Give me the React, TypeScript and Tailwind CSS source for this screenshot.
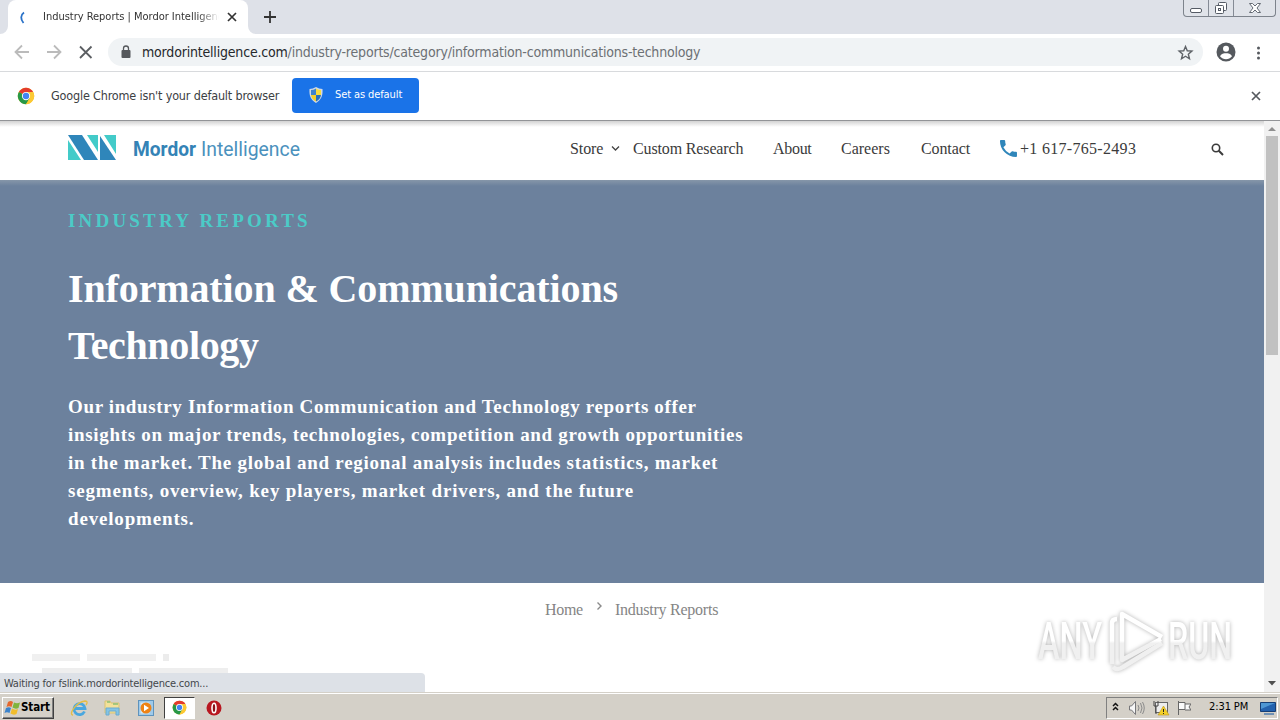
import { clsx } from 'clsx';
import type { ReactNode } from 'react';

const tahoma = "font-['DejaVu_Sans_Condensed','DejaVu_Sans',sans-serif] [font-stretch:condensed]";
const times = "font-['Liberation_Serif',serif]";

const ChromeLogo = ({ size }: { size: number }) => (
  <svg width={size} height={size} viewBox="0 0 48 48">
    <circle cx="24" cy="24" r="22" fill="#fbc116" />
    <path d="M24 24 5 13A22 22 0 0 1 43 13H24Z" fill="#e33b2e" />
    <path d="M24 24 5 13A22 22 0 0 0 24 46L34 30Z" fill="#279847" />
    <path d="M24 13H43A22 22 0 0 1 24 46L34 29Z" fill="#fcc934" />
    <circle cx="24" cy="24" r="11" fill="#fff" />
    <circle cx="24" cy="24" r="8.5" fill="#4285f4" />
  </svg>
);

const Cross = ({ size, color }: { size: number; color: string }) => (
  <svg width={size} height={size} viewBox="0 0 10 10" stroke={color} strokeWidth="1.7">
    <path d="M1 1l8 8M9 1L1 9" />
  </svg>
);

const TabStrip = () => (
  <div className="flex h-[34px] shrink-0 bg-[#dee1e8]">
    <svg className="self-end" width="8" height="8" viewBox="0 0 8 8">
      <path d="M8 0v8H0a8 8 0 0 0 8-8Z" fill="#fff" />
    </svg>
    <div className="flex w-60 items-center rounded-t-lg bg-white">
      <svg className="ml-2.5 shrink-0" width="9" height="16" viewBox="0 0 9 16" fill="none" stroke="#2a72c8" strokeWidth="1.8">
        <path d="M6 3.5C2.5 6 2.3 10 5.5 14" />
      </svg>
      <div className={clsx(tahoma, 'ml-4 w-[176px] overflow-hidden whitespace-nowrap text-[11px] tracking-[-0.02px] text-[#333] [mask-image:linear-gradient(to_right,black_88%,transparent)]')}>
        Industry Reports | Mordor Intelligence
      </div>
      <div className="ml-2"><Cross size={10} color="#333" /></div>
    </div>
    <svg className="self-end" width="8" height="8" viewBox="0 0 8 8">
      <path d="M0 0v8h8a8 8 0 0 1-8-8Z" fill="#fff" />
    </svg>
    <svg className="ml-2 mt-[11px]" width="12" height="12" stroke="#333" strokeWidth="1.8">
      <path d="M6 0v12M0 6h12" />
    </svg>
    <div className="ml-auto mr-1 flex h-[17px] w-[93px] overflow-hidden rounded-b-[4px] border border-t-0 border-[#7d838c] bg-[#e0e3e9]">
      <svg width="92" height="16" fill="none" stroke="#555b65">
        <path d="M24.5 0v16M49.5 0v16" stroke="#858b95" />
        <rect x="6.5" y="8.5" width="11" height="4" rx="1.5" fill="#fff" />
        <rect x="34.5" y="2.5" width="8" height="8" rx="1" fill="#fff" />
        <rect x="31.5" y="5.5" width="8" height="8" rx="1" fill="#fff" />
        <rect x="34.5" y="8.5" width="2" height="2" />
        <path d="M65.5 3.5h3l2.5 2.5 2.5-2.5h3l-3.500 4.500 3.500 4.500h-3l-2.500-2.500-2.500 2.500h-3l3.500-4.500Z" fill="#fff" strokeWidth=".9" />
      </svg>
    </div>
  </div>
);

const Toolbar = () => (
  <div className="flex h-[38px] shrink-0 items-center border-b border-[#d8dadd] bg-white">
    <svg className="mb-0.5 ml-3.5" width="80" height="16" viewBox="0 0 80 16" fill="none" strokeWidth="1.8">
      <path d="M15 8H2M8 1.500L1.500 8 8 14.500M33 8h13M40 1.500L46.500 8 40 14.500" stroke="#bbb" />
      <path d="M66 2.500L77.500 14M77.500 2.500L66 14" stroke="#5b5e62" />
    </svg>
    <div className="mb-px ml-3.5 flex h-7 w-[1095px] items-center rounded-full bg-[#f0f3f5] pl-[13px] pr-[9px]">
      <svg width="10" height="14" viewBox="0 0 10 14">
        <rect y="5" x=".5" width="9" height="8" rx="1" fill="#55585c" />
        <path d="M2.500 6V3.500a2.500 2.500 0 0 1 5 0V6" fill="none" stroke="#55585c" strokeWidth="1.3" />
      </svg>
      <span className={clsx(tahoma, 'ml-[11px] whitespace-nowrap text-[14px] tracking-[-0.19px] text-[#6c7074]')}>
        <span className="text-[#25282c]">mordorintelligence.com</span>
        /industry-reports/category/information-communications-technology
      </span>
      <svg className="ml-auto" width="17" height="17" viewBox="0 0 24 24" fill="none" stroke="#5f6368" strokeWidth="2">
        <path d="M12 3.500l2.500 6 6.500.500-5 4.300 1.600 6.500L12 17.300l-5.600 3.500L8 14.300 3 10l6.500-.500Z" />
      </svg>
    </div>
    <svg className="mb-px ml-[13px]" width="20" height="20" viewBox="0 0 20 20">
      <circle cx="10" cy="10" r="9.5" fill="#55595e" />
      <circle cx="10" cy="6.8" r="3" fill="#fff" />
      <path d="M4 14.300c1-2.500 4-3 6-3s5 .500 6 3c-3 4-9 4-12 0Z" fill="#fff" />
    </svg>
    <svg className="ml-5" width="6" height="16" fill="#55595e">
      <circle cx="2.5" cy="3" r="1.5" /><circle cx="2.5" cy="8" r="1.5" /><circle cx="2.5" cy="13" r="1.5" />
    </svg>
  </div>
);

const Shield = () => (
  <svg width="14" height="16" viewBox="0 0 14 16">
    <path d="M7 0Q4 2 .500 2C0 9 2 13 7 16V0Z" fill="#cfd9e6" />
    <path d="M7 0q3 2 6.500 2C14 9 12 13 7 16Z" fill="#cfd9e6" />
    <path d="M7 1.500Q4.500 3 2 3v5h5Z" fill="#3f83ce" />
    <path d="M7 1.500Q9.500 3 12 3v5H7Z" fill="#f8dc3e" />
    <path d="M2 8h5v6.500Q2.500 12 2 8Z" fill="#f5cf29" />
    <path d="M12 8H7v6.500Q11.500 12 12 8Z" fill="#2870bd" />
  </svg>
);

const InfoBar = () => (
  <div className="flex h-[49px] shrink-0 items-center border-b border-[#929497] bg-white pl-[17px] pr-[19px]">
    <ChromeLogo size={18} />
    <span className={clsx(tahoma, 'ml-4 w-[241px] whitespace-nowrap text-[12.5px] tracking-[-0.17px] text-[#3c4043]')}>
      Google Chrome isn't your default browser
    </span>
    <button className="mb-0.5 flex h-[35px] w-[127px] items-center rounded bg-[#1a73e8] pl-[17px] text-white">
      <Shield />
      <span className={clsx(tahoma, 'ml-3 whitespace-nowrap text-[11px] tracking-[-0.1px]')}>Set as default</span>
    </button>
    <div className="ml-auto"><Cross size={10} color="#55595e" /></div>
  </div>
);

const NavItem = ({ className, children }: { className: string; children: ReactNode }) => (
  <a className={clsx('block whitespace-nowrap', className)}>{children}</a>
);

const SiteHeader = () => (
  <header className="flex h-[59px] shrink-0 items-center bg-[linear-gradient(#d2d2d2,#fff_6px)] pb-1 pl-[68px]">
    <svg className="mb-[3px]" width="234" height="34" viewBox="0 0 234 34" fontFamily="Roboto, sans-serif" fontSize="20">
      <path d="M0 5h14l16 25H16Z" fill="#2f86ba" />
      <path d="M0 10l13 20H0ZM19 5h11v17ZM36 5h12v19Z" fill="#43cbc9" />
      <path d="M32 6l16 24H32Z" fill="#2f86ba" />
      <text x="65" y="26" textLength="63" lengthAdjust="spacingAndGlyphs" fontWeight="700" fill="#3483b6">Mordor</text>
      <text x="133" y="26" textLength="99" lengthAdjust="spacingAndGlyphs" fill="#4b91bd">Intelligence</text>
    </svg>
    <nav className={clsx(times, 'ml-[268px] flex items-center text-[16px] text-[#3b3b3b]')}>
      <NavItem className="w-[41px] tracking-[-0.1px]">Store</NavItem>
      <svg className="w-[22px]" width="22" height="8" viewBox="0 0 22 8" fill="none" stroke="#444" strokeWidth="1.3">
        <path d="M1 1.500l3.500 3.500L8 1.500" />
      </svg>
      <NavItem className="w-[140px] tracking-[-0.14px]">Custom Research</NavItem>
      <NavItem className="w-[68px] tracking-[-0.3px]">About</NavItem>
      <NavItem className="w-20">Careers</NavItem>
      <NavItem className="w-[78px] tracking-[-0.1px]">Contact</NavItem>
      <svg width="18" height="17" viewBox="2 3 19 18" fill="#2f86ba">
        <path d="M6.620 10.790a15.150 15.150 0 0 0 6.590 6.590l2.200-2.200a1 1 0 0 1 1.020-.240c1.120.370 2.330.570 3.570.570a1 1 0 0 1 1 1V20a1 1 0 0 1-1 1A17 17 0 0 1 3 4a1 1 0 0 1 1-1h3.500a1 1 0 0 1 1 1c0 1.250.200 2.450.570 3.570a1 1 0 0 1-.250 1.020Z" />
      </svg>
      <NavItem className="ml-[3px] w-[191px] tracking-[0.3px]">+1 617-765-2493</NavItem>
      <svg className="mt-0.5" width="13" height="13" fill="none" stroke="#3b3b3b" strokeWidth="1.6">
        <circle cx="5" cy="5" r="3.7" />
        <path d="M7.800 7.800l4.200 4.200" strokeWidth="2" />
      </svg>
    </nav>
  </header>
);

const Hero = () => (
  <section className={clsx(times, 'h-[403px] shrink-0 bg-[linear-gradient(#8696a9,#6c819d_6px)] pl-[68px] pt-[27px] font-bold text-white')}>
    <p className="text-[19px] leading-7 tracking-[3.2px] text-[#4bcbc7]">INDUSTRY REPORTS</p>
    <h1 className="mt-[25px] whitespace-nowrap text-[40px] leading-[57px]">
      <span className="block tracking-[-0.12px]">Information &amp; Communications</span>
      <span className="block tracking-[-0.35px]">Technology</span>
    </h1>
    <p className="mt-[19px] whitespace-nowrap text-[19px] leading-7">
      <span className="block tracking-[0.64px]">Our industry Information Communication and Technology reports offer</span>
      <span className="block tracking-[0.69px]">insights on major trends, technologies, competition and growth opportunities</span>
      <span className="block tracking-[0.74px]">in the market. The global and regional analysis includes statistics, market</span>
      <span className="block tracking-[0.83px]">segments, overview, key players, market drivers, and the future</span>
      <span className="block tracking-[0.83px]">developments.</span>
    </p>
  </section>
);

const Watermark = () => (
  <svg className="absolute left-[1030px] top-[602px] drop-shadow-[0_0_2px_rgba(0,0,0,0.3)]" width="210" height="76" fill="url(#fade)" fontFamily="Roboto, sans-serif" fontSize="51" fontWeight="500">
    <linearGradient id="fade" gradientUnits="userSpaceOnUse" x1="0" y1="10" x2="0" y2="70">
      <stop offset=".48" stopColor="#fff" />
      <stop offset=".52" stopColor="#f0f0f0" />
    </linearGradient>
    <text x="8" y="57" textLength="64" lengthAdjust="spacingAndGlyphs">ANY</text>
    <text x="138" y="57" textLength="64" lengthAdjust="spacingAndGlyphs">RUN</text>
    <g fill="none" stroke="url(#fade)" strokeWidth="4.5" strokeLinejoin="round">
      <path d="M87 17q-5 0-5 4V62" />
      <path d="M131 37L92 58V12l40 23" />
      <path d="M83 65q4 4 10 0l39-24" />
    </g>
  </svg>
);

const Page = () => (
  <div className="flex h-[571px] shrink-0">
    <main className="flex w-[1264px] flex-col bg-white">
      <SiteHeader />
      <Hero />
      <div className={clsx(times, 'ml-[545px] mt-[17px] flex h-5 items-center text-[16px] text-[#858585]')}>
        <span className="w-[50px] tracking-[-0.3px]">Home</span>
        <svg className="mb-2" width="20" height="10" fill="none" stroke="#8a8a8a" strokeWidth="1.4">
          <path d="M2.500 1.500L6 5 2.500 8.500" />
        </svg>
        <span className="whitespace-nowrap tracking-[-0.25px]">Industry Reports</span>
      </div>
      <div className="ml-8 mt-[34px] flex h-[7px] gap-[7px]">
        <div className="w-12 bg-[#f0f0f0]" />
        <div className="w-[69px] bg-[#f0f0f0]" />
        <div className="w-1.5 bg-[#ececec]" />
      </div>
      <div className="ml-[42px] mt-[7px] flex h-[5px] gap-[7px]">
        <div className="w-[90px] bg-[#eee]" />
        <div className="w-[89px] bg-[#eee]" />
      </div>
      <div className={clsx(tahoma, 'flex h-[19px] w-[425px] items-center rounded-tr bg-[#dde1e7] pl-1 pt-[3px] text-[11px] tracking-[-0.21px] text-[#44474b]')}>
        Waiting for fslink.mordorintelligence.com...
      </div>
    </main>
    <div className="flex w-4 flex-col items-center bg-[#f1f1f1]">
      <svg width="16" height="15"><path d="M4 10h8L8 6Z" fill="#8f8f8f" /></svg>
      <div className="h-[219px] w-3 bg-[#c1c1c1]" />
      <svg className="mt-auto" width="16" height="17"><path d="M4 6h8l-4 4.500Z" fill="#505050" /></svg>
    </div>
  </div>
);

const WindowsFlag = () => (
  <svg className="shrink-0" width="17" height="16" viewBox="0 0 17 16">
    <path d="M4 2q3-2 5 0L7.500 7Q5 5.500 2.500 7Z" fill="#e5682d" />
    <path d="M10 2.500q3 1.500 6 0L14.500 8q-3 1.500-6-.500Z" fill="#80b43c" />
    <path d="M2 8q3-1.500 5 0l-1.500 5q-2.500-1.500-5 0Z" fill="#3b83cc" />
    <path d="M8 8.500q3 2 6 .500l-1.500 5q-3 1.500-6-.500Z" fill="#f1bd2c" />
  </svg>
);

const TaskBar = () => (
  <div className={clsx(tahoma, 'flex h-7 shrink-0 items-center border-t border-[#d4d0c8] bg-[#d4d0c8] text-[11px] text-black shadow-[inset_0_1px_#fff]')}>
    <button className="ml-0.5 mt-0.5 flex h-[22px] w-[52px] items-center border border-b-[#404040] border-l-white border-r-[#404040] border-t-white pl-px text-[11.5px] font-bold tracking-[-0.1px] shadow-[inset_-1px_-1px_#808080]">
      <WindowsFlag />
      Start
    </button>
    <svg className="ml-4 mt-0.5" width="18" height="18" viewBox="0 0 18 18" fill="none">
      <path d="M14.500 12.500A5.500 5.500 0 1 1 15 9.500H5" stroke="#49a7df" strokeWidth="2.8" />
      <path d="M3 16C-2 16 6 3 15 2c4 0 1 4 1 4" stroke="#e4bd45" strokeWidth="1.3" />
    </svg>
    <svg className="ml-4 mt-0.5" width="17" height="17" viewBox="0 0 17 17">
      <path d="M1 2h5l1 2h8v10H1Z" fill="#f3e19a" stroke="#d9c373" />
      <path d="M3 3h3M9 5h5" stroke="#8dc077" strokeWidth="1.5" />
      <path d="M2 9h13v7h-3v-4H5v4H2Z" fill="#83c4e6" stroke="#6aabd0" />
    </svg>
    <svg className="ml-[17px] mt-0.5" width="16" height="16" viewBox="0 0 16 16">
      <rect x=".5" y=".5" width="15" height="15" fill="#9fcaea" stroke="#5e93bd" />
      <rect x="2.5" y="2.5" width="9" height="11" fill="#d8eaf6" />
      <circle cx="8" cy="8" r="5.5" fill="#ee8215" />
      <path d="M6 4.800v6.400L11 8Z" fill="#fff" />
    </svg>
    <div className="ml-2.5 mt-0.5 flex h-[22px] w-[31px] items-center justify-center border border-b-white border-l-[#404040] border-r-white border-t-[#404040] bg-white">
      <ChromeLogo size={15} />
    </div>
    <svg className="ml-[11px] mt-0.5" width="16" height="16">
      <circle cx="8" cy="8" r="7.5" fill="#b81720" />
      <ellipse cx="8" cy="8" rx="2" ry="4.8" fill="#8c1118" stroke="#fff" strokeWidth="1.6" />
    </svg>
    <div className="ml-auto mr-0.5 mt-0.5 flex h-[22px] w-[172px] items-center border border-b-white border-l-[#808080] border-r-white border-t-[#808080]">
      <svg className="ml-[5px]" width="79" height="18" viewBox="0 0 79 18" fill="none">
        <path d="M1 7l2.500-2.500L6 7M1 11l2.500-2.500L6 11" stroke="#111" strokeWidth="1.5" />
        <path d="M17.500 7h2l4-4.500v13L19.500 11h-2Z" fill="#f7f7f7" stroke="#77777a" />
        <path d="M26 6q2 3 0 6M28.500 4q3 5 0 10M30.500 3q3.500 6 0 12" stroke="#8b8b8b" />
        <rect x="43.5" y="3.5" width="12" height="10" fill="#ededed" stroke="#666" />
        <path d="M42 2v5h4V2M44 7v8" stroke="#444" />
        <path d="M46 16h11l-5.500-9Z" fill="#f3cf27" stroke="#bd951b" strokeWidth=".6" />
        <path d="M51.500 10v3M51.500 14v1" stroke="#222" />
        <path d="M66.500 2v14M67 3.500h6v7h-6M73 5h6l-2 3 2 3h-6" fill="#fafafa" stroke="#666" />
      </svg>
      <span className="ml-[18px] w-[51px] whitespace-nowrap tracking-[-0.1px]">2:31 PM</span>
      <svg width="16" height="16">
        <path d="M.500 2.500h15v9H.500Z" fill="#2361ad" stroke="#163e75" />
        <path d="M1 3h14L1 9Z" fill="#4d96d3" />
        <path d="M4 14h10" stroke="#6f91b5" strokeWidth="2" />
      </svg>
    </div>
  </div>
);

export default function App() {
  return (
    <div className="relative flex h-[720px] w-[1280px] flex-col overflow-hidden bg-white">
      <TabStrip />
      <Toolbar />
      <InfoBar />
      <Page />
      <TaskBar />
      <Watermark />
    </div>
  );
}
